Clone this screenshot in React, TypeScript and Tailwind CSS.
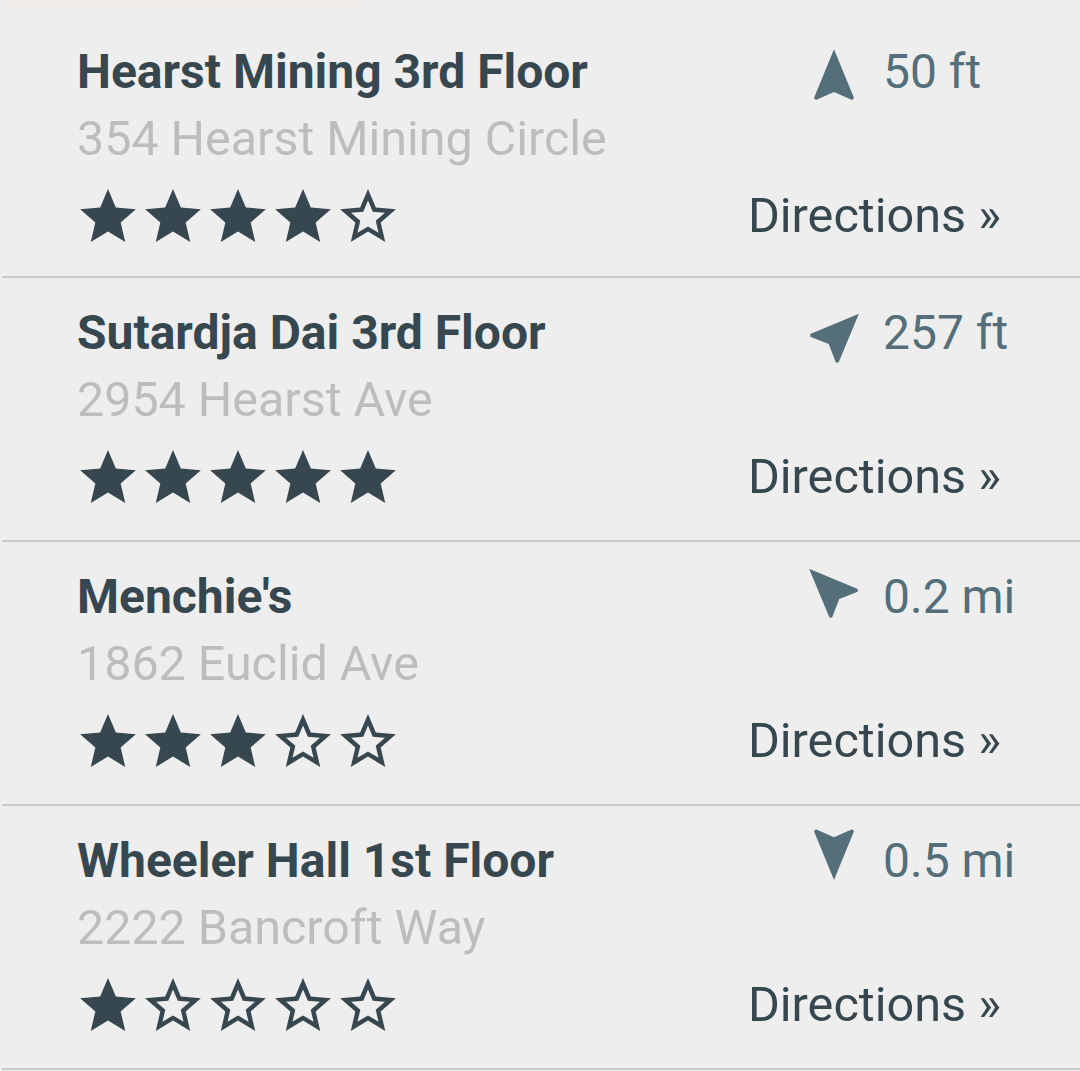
const places = [
  {
    name: "Hearst Mining 3rd Floor",
    address: "354 Hearst Mining Circle",
    rating: 4,
    distance: "50 ft",
    heading: 0,
    shift: "translate-y-[4px]",
  },
  {
    name: "Sutardja Dai 3rd Floor",
    address: "2954 Hearst Ave",
    rating: 5,
    distance: "257 ft",
    heading: 45,
    shift: "translate-x-[7px]",
  },
  {
    name: "Menchie's",
    address: "1862 Euclid Ave",
    rating: 3,
    distance: "0.2 mi",
    heading: -45,
    shift: "-translate-x-[7px] -translate-y-[9px]",
  },
  {
    name: "Wheeler Hall 1st Floor",
    address: "2222 Bancroft Way",
    rating: 1,
    distance: "0.5 mi",
    heading: 180,
    shift: "-translate-y-[5px]",
  },
]

function Star({ filled }: { filled: boolean }) {
  return (
    <svg viewBox="2 2 20 19" width="56" height="53" className="fill-[#37474f]">
      {filled ? (
        <path d="M12 17.27L18.18 21l-1.64-7.03L22 9.24l-7.19-.61L12 2 9.19 8.63 2 9.24l5.46 4.73L5.82 21z" />
      ) : (
        <path d="M22 9.24l-7.19-.62L12 2 9.19 8.63 2 9.24l5.46 4.73L5.82 21 12 17.27 18.18 21l-1.63-7.03L22 9.24zM12 15.4l-3.76 2.27 1-4.28-3.32-2.88 4.38-.38L12 6.1l1.71 4.04 4.38.38-3.32 2.88 1 4.28L12 15.4z" />
      )}
    </svg>
  )
}

function Heading({ angle, shift }: { angle: number; shift: string }) {
  return (
    <svg viewBox="0 0 24 24" width="64" height="64" className={`-my-[4px] shrink-0 overflow-visible fill-[#546e7a] ${shift}`}>
      <g transform={`rotate(${angle} 12 11.5)`}>
        <path d="M12 2L4.5 20.29l.71.71L12 18l6.79 3 .71-.71z" />
      </g>
    </svg>
  )
}

export default function App() {
  return (
    <div className="min-h-[1071px] w-[1080px] bg-[#eeeeee] font-['Roboto',sans-serif]">
      <div className="h-[17px] pt-[2px] pl-[3px]">
        <div className="h-[9px] w-[359px] bg-[#f0ebe8]"></div>
      </div>
      {places.map((p, i) => (
        <div
          key={p.name}
          className={`ml-[2px] flex border-b-2 border-[#c8c8c8] ${i === 0 ? "h-[261px]" : "h-[264px]"}`}
        >
          <div className="flex-1 pl-[75px] pt-[27px]">
            <div className="text-[48px] leading-[56px] font-bold text-[#37474f]">{p.name}</div>
            <div className="mt-[11px] text-[48.4px] leading-[56px] text-[#bdbdbd]">{p.address}</div>
            <div className="mt-[22px] ml-[3px] flex gap-[9px]">
              {[0, 1, 2, 3, 4].map((s) => (
                <Star key={s} filled={s < p.rating} />
              ))}
            </div>
          </div>
          <div className="mr-[67px] w-[264px] pt-[27px]">
            <div className="flex h-[56px] items-center pl-[53px]">
              <Heading angle={p.heading} shift={p.shift} />
              <span className="ml-[17px] whitespace-nowrap text-[48px] leading-[56px] text-[#546e7a]">
                {p.distance}
              </span>
            </div>
            <div className="mt-[88px] flex justify-end pr-[12px]">
              <span className="whitespace-nowrap text-[48.6px] leading-[56px] text-[#37474f]">Directions »</span>
            </div>
          </div>
        </div>
      ))}
    </div>
  )
}
